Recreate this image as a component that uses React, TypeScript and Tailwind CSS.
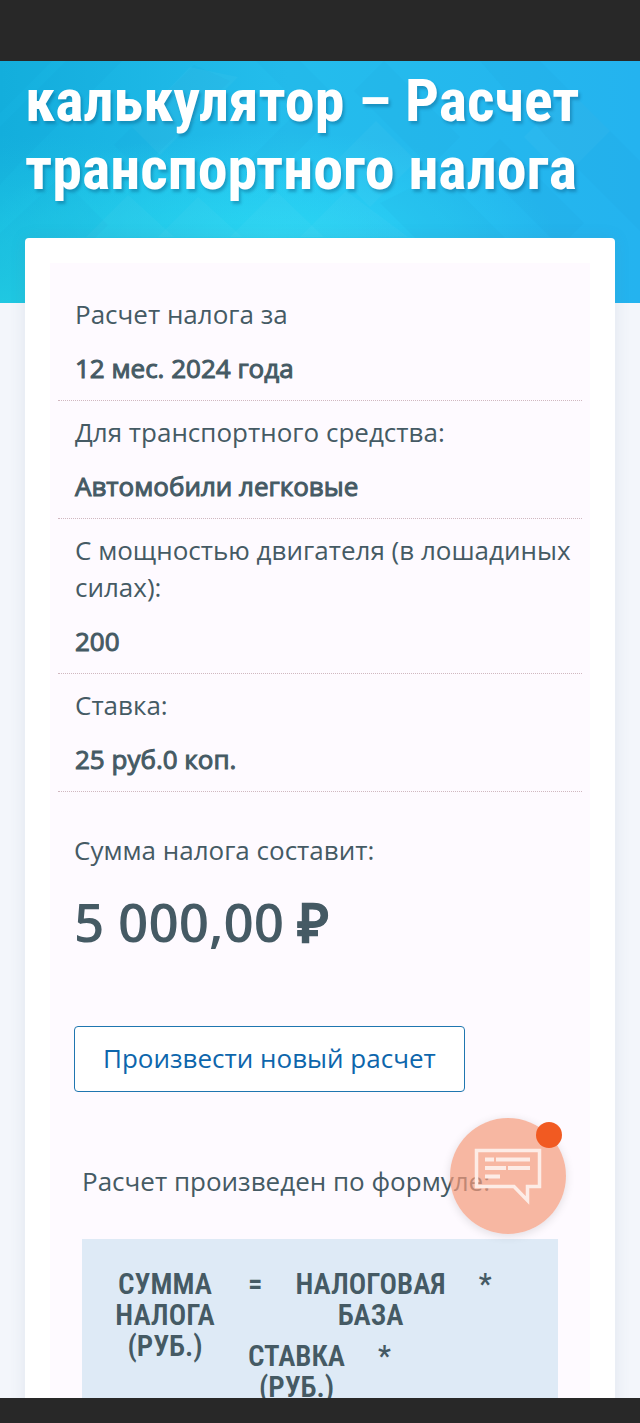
const rows = [
  { label: "Расчет налога за", value: "12 мес. 2024 года" },
  { label: "Для транспортного средства:", value: "Автомобили легковые" },
  { label: "С мощностью двигателя (в лошадиных силах):", value: "200" },
  { label: "Ставка:", value: "25 руб.0 коп." },
];

function HeroBackground() {
  return (
    <svg
      className="absolute inset-0 h-full w-full"
      viewBox="0 0 640 242"
      preserveAspectRatio="none"
      aria-hidden="true"
    >
      <defs>
        <linearGradient id="base" x1="0" y1="0" x2="1" y2="0">
          <stop offset="0" stopColor="#14b0de" />
          <stop offset="0.45" stopColor="#24bdec" />
          <stop offset="1" stopColor="#24b3ef" />
        </linearGradient>
        <radialGradient id="glow" cx="0.42" cy="0.74" r="0.45">
          <stop offset="0" stopColor="#2cdaf8" stopOpacity="0.9" />
          <stop offset="1" stopColor="#2cdaf8" stopOpacity="0" />
        </radialGradient>
        <radialGradient id="corner" cx="0" cy="1" r="0.7">
          <stop offset="0" stopColor="#22cfe4" stopOpacity="0.9" />
          <stop offset="1" stopColor="#22cfe4" stopOpacity="0" />
        </radialGradient>
      </defs>
      <rect width="640" height="242" fill="url(#base)" />
      <rect width="640" height="242" fill="url(#glow)" />
      <rect width="640" height="242" fill="url(#corner)" />
      {/* slanted bands, left half leans right and right half leans left */}
      <g fill="#0b80c8" fillOpacity="0.05">
        <path d="M0 0h52L0 52z" />
        <path d="M66 0h56L62 60 26 96 0 124V66z" />
        <path d="M194 4l-80 80 26 26 90-90z" />
        <path d="M256 0l46 46-58 58 20 20 80-80-44-44z" />
        <path d="M60 116l48 48-84 84H0v-76z" />
        <path d="M384 0l76 76-30 30L354 30z" />
        <path d="M480 0h60l120 120v70l-60-60-50-50z" />
        <path d="M500 78l84 84-24 24-84-84z" />
        <path d="M440 112l70 70H420l-40-40z" />
      </g>
      <g fill="#ffffff" fillOpacity="0.03">
        <path d="M128 134l-42 42h88z" />
        <path d="M198 136l-40 40h84z" />
        <path d="M276 130l-46 46h94z" />
        <path d="M346 130l-46 46h108z" />
        <path d="M190 6l-58 60 28 28 78-78z" />
        <path d="M376 60l-46 46 40 40 46-46z" />
        <path d="M570 30l-46 46 40 40 46-46z" />
      </g>
    </svg>
  );
}

function ChatButton() {
  return (
    <button
      type="button"
      aria-label="Чат"
      className="absolute right-[74px] bottom-[164px] size-[116px] rounded-full bg-[#f39a7b]/70 shadow-[0_2px_10px_rgba(0,0,0,0.12)]"
    >
      <svg viewBox="0 0 116 116" fill="none" className="size-full">
        <path
          d="M26.500 32.500h63v36H77.500v14L64 68.500H26.500z"
          stroke="#fdece6"
          strokeWidth="3.500"
        />
        <path
          d="M35 41.500h9M46 41.500h34M35 50h21M58 50h22M35 58.500h15"
          stroke="#fdece6"
          strokeWidth="4"
        />
      </svg>
      <span className="absolute top-1 right-1 size-[26px] rounded-full bg-[#f15a22]" />
    </button>
  );
}

function Formula() {
  return (
    <div className="flex min-h-[220px] items-start bg-[#deeaf6] px-[33px] pt-[30px] font-['Roboto_Condensed','Roboto',sans-serif] text-[29px] leading-[31px] font-semibold">
      <div className="w-[100px] shrink-0 text-center">
        СУММА
        <br />
        НАЛОГА
        <br />
        (РУБ.)
      </div>
      <div className="ml-[33px] flex flex-col gap-[10px]">
        <div className="flex text-center">
          <span>=</span>
          <span className="mx-[33px]">
            НАЛОГОВАЯ
            <br />
            БАЗА
          </span>
          <span className="font-medium">*</span>
        </div>
        <div className="flex text-center">
          <span className="mr-[33px]">
            СТАВКА
            <br />
            (РУБ.)
          </span>
          <span className="font-medium">*</span>
        </div>
      </div>
    </div>
  );
}

export default function App() {
  return (
    <div className="flex h-screen flex-col bg-[#f3f6fb] font-['Open_Sans',sans-serif] text-[26px] leading-[37px] text-[#455a64]">
      <div className="h-[61px] shrink-0 bg-[#282828]" />

      <main className="relative min-h-0 flex-1 overflow-hidden">
        <header className="relative h-[242px] overflow-hidden">
          <HeroBackground />
          <h1 className="relative px-[25px] pt-[6px] font-['Roboto_Condensed','Roboto',sans-serif] text-[60px] leading-[68px] font-bold text-white [text-shadow:2px_3px_3px_rgba(0,60,100,0.3)]">
            калькулятор – Расчет транспортного налога
          </h1>
        </header>

        <div className="relative mx-[25px] -mt-[65px] rounded bg-white p-[25px] shadow-[0_0_16px_rgba(90,110,140,0.12)]">
          <section className="bg-[#fefaff] px-2 pt-5">
            <dl>
              {rows.map((row) => (
                <div
                  key={row.label}
                  className="border-b border-dotted border-[#d0b8c0] pt-[13px] pb-[13px] pl-[17px]"
                >
                  <dt>{row.label}</dt>
                  <dd className="mt-[17px] [-webkit-text-stroke:1px_#455a64]">
                    {row.value}
                  </dd>
                </div>
              ))}
            </dl>

            <div className="px-4 pt-10">
              <p>Сумма налога составит:</p>
              <p className="mt-[19px] text-[53px] leading-[68px] font-semibold">
                5 000,00 <span className="font-bold [-webkit-text-stroke:1px_#455a64]">₽</span>
              </p>
              <button
                type="button"
                className="mt-[70px] h-[66px] rounded border border-[#1f76b0] bg-white px-7 pb-[2px] text-[#0d66ac]"
              >
                Произвести новый расчет
              </button>
            </div>

            <div className="px-6 pt-[71px]">
              <p className="mb-[39px]">Расчет произведен по формуле:</p>
              <Formula />
            </div>
          </section>
        </div>

        <ChatButton />
      </main>

      <div className="h-[25px] shrink-0 bg-[#282828]" />
    </div>
  );
}
